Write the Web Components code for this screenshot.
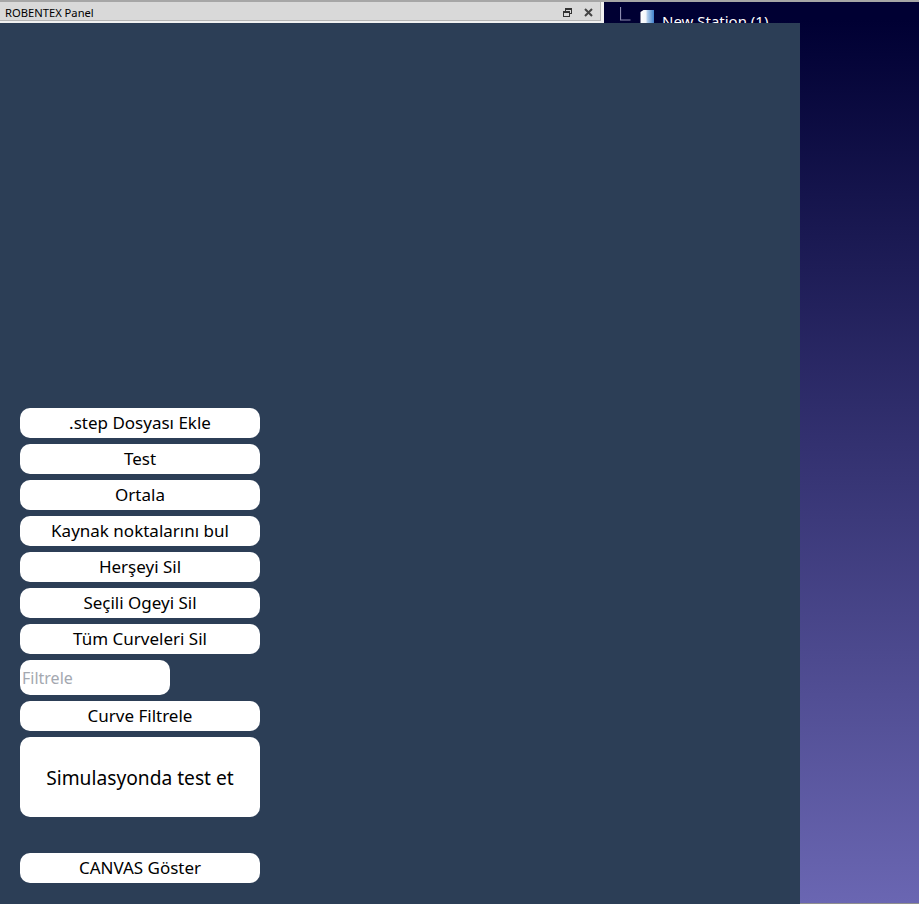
<!DOCTYPE html>
<html>
<head>
<meta charset="utf-8">
<title>ROBENTEX Panel</title>
<style>
  html, body { margin: 0; height: 100%; overflow: hidden; }
  body { font-family: "Noto Sans", "DejaVu Sans", sans-serif; }
</style>
</head>
<body>
<template id="tpl-desktop">
  <style>
    :host {
      display: grid;
      grid-template-columns: 604px 1fr;
      width: 919px;
      height: 904px;
      box-sizing: border-box;
      border-top: 2px solid #a6a6a6;
      border-bottom: 1px solid #8f8f8f;
      background: #f0f0f0;
      position: relative;
    }
    .left { display: flex; flex-direction: column; }
    .panel {
      position: absolute;
      left: 0;
      top: 21px;
      width: 800px;
      height: 881px;
    }
  </style>
  <div class="left"><slot name="title"></slot></div>
  <slot name="viewport"></slot>
  <div class="panel"><slot></slot></div>
</template>

<template id="tpl-title-bar">
  <style>
    :host {
      display: flex;
      align-items: center;
      box-sizing: border-box;
      height: 19px;
      width: 601px;
      padding: 2px 5px 0;
      background: #d9d9d9;
      border-bottom: 1px solid #b4b4b4;
      border-right: 1px solid #b4b4b4;
      color: #000;
      font: 11.2px "Noto Sans", "DejaVu Sans", sans-serif;
    }
    span { flex: 1; }
    svg { display: block; }
    .btns { display: flex; gap: 12px; margin-right: 2px; align-items: center; }
  </style>
  <span><slot></slot></span>
  <div class="btns">
    <svg width="9" height="9" viewBox="0 0 9 9" fill="none" stroke="#333" stroke-width="1" shape-rendering="crispEdges">
      <rect x="2.5" y="0.5" width="6" height="5"/>
      <path d="M2.5 1.5h6"/>
      <rect x="0.5" y="3.5" width="6" height="5" fill="#d9d9d9"/>
      <path d="M0.5 4.5h6"/>
    </svg>
    <svg width="9" height="9" viewBox="0 0 9 9" fill="none" stroke="#444" stroke-width="2">
      <path d="M1 1l7 7M8 1l-7 7"/>
    </svg>
  </div>
</template>

<template id="tpl-viewport">
  <style>
    :host {
      display: block;
      position: relative;
      overflow: hidden;
      background: linear-gradient(180deg, #000033 0%, #000033 2%, #6a66b2 100%);
      color: #fff;
      font: 15px "Noto Sans", "DejaVu Sans", sans-serif;
    }
    .node {
      display: flex;
      align-items: flex-start;
      gap: 8px;
      padding: 5px 0 0 16px;
    }
    svg { display: block; flex: none; }
    span { line-height: 20px; margin-top: 4px; }
  </style>
  <div class="node">
    <svg width="34" height="19" viewBox="0 0 34 19">
      <defs>
        <linearGradient id="face" x1="0" x2="1" y1="0" y2="0">
          <stop offset="0" stop-color="#ffffff"/>
          <stop offset="0.4" stop-color="#f2f5fa"/>
          <stop offset="0.5" stop-color="#b5d0ec"/>
          <stop offset="1" stop-color="#3f80cc"/>
        </linearGradient>
      </defs>
      <path d="M0.5 0v13h10" fill="none" stroke="#8d8db0" stroke-width="1.2"/>
      <path d="M20.5 5l3-2h10.5v16h-13.5z" fill="url(#face)"/>
    </svg>
    <span><slot></slot></span>
  </div>
</template>

<template id="tpl-panel">
  <style>
    :host {
      display: flex;
      flex-direction: column;
      justify-content: flex-end;
      align-items: flex-start;
      box-sizing: border-box;
      width: 100%;
      height: 100%;
      padding: 0 0 21px 20px;
      gap: 6px;
      background: #2c3e56;
    }
  </style>
  <slot></slot>
</template>

<template id="tpl-btn">
  <style>
    :host { display: block; width: 240px; }
    :host([big]) button { height: 80px; padding: 0; font-size: 19.2px; }
    :host([spaced]) { margin-top: 30px; }
    button {
      display: block;
      box-sizing: border-box;
      width: 100%;
      height: 30px;
      margin: 0;
      padding: 0 0 1px;
      border: 0;
      border-radius: 10px;
      background: #fff;
      color: #000;
      font: 17px "Noto Sans", "DejaVu Sans", sans-serif;
    }
  </style>
  <button><slot></slot></button>
</template>

<template id="tpl-filter">
  <style>
    :host { display: block; width: 150px; }
    input {
      display: block;
      box-sizing: border-box;
      width: 100%;
      height: 35px;
      margin: 0;
      padding: 0 2px;
      border: 0;
      border-radius: 10px;
      background: #fff;
      outline: none;
      font: 16px "Noto Sans", "DejaVu Sans", sans-serif;
    }
    input::placeholder { color: #a4a8b0; opacity: 1; }
  </style>
  <input type="text">
</template>

<rbx-desktop>
  <rbx-title-bar slot="title">ROBENTEX Panel</rbx-title-bar>
  <rbx-viewport slot="viewport">New Station (1)</rbx-viewport>
  <rbx-panel>
    <rbx-btn>.step Dosyası Ekle</rbx-btn>
    <rbx-btn>Test</rbx-btn>
    <rbx-btn>Ortala</rbx-btn>
    <rbx-btn>Kaynak noktalarını bul</rbx-btn>
    <rbx-btn>Herşeyi Sil</rbx-btn>
    <rbx-btn>Seçili Ogeyi Sil</rbx-btn>
    <rbx-btn>Tüm Curveleri Sil</rbx-btn>
    <rbx-filter placeholder="Filtrele"></rbx-filter>
    <rbx-btn>Curve Filtrele</rbx-btn>
    <rbx-btn big>Simulasyonda test et</rbx-btn>
    <rbx-btn spaced>CANVAS Göster</rbx-btn>
  </rbx-panel>
</rbx-desktop>

<script>
  function fromTemplate(id) {
    return class extends HTMLElement {
      constructor() {
        super();
        this.attachShadow({ mode: 'open' });
        this.shadowRoot.appendChild(document.getElementById(id).content.cloneNode(true));
      }
    };
  }

  class RbxFilter extends fromTemplate('tpl-filter') {
    connectedCallback() {
      this.shadowRoot.querySelector('input').placeholder = this.getAttribute('placeholder') || '';
    }
  }

  customElements.define('rbx-desktop', fromTemplate('tpl-desktop'));
  customElements.define('rbx-title-bar', fromTemplate('tpl-title-bar'));
  customElements.define('rbx-viewport', fromTemplate('tpl-viewport'));
  customElements.define('rbx-panel', fromTemplate('tpl-panel'));
  customElements.define('rbx-btn', fromTemplate('tpl-btn'));
  customElements.define('rbx-filter', RbxFilter);
</script>
</body>
</html>
